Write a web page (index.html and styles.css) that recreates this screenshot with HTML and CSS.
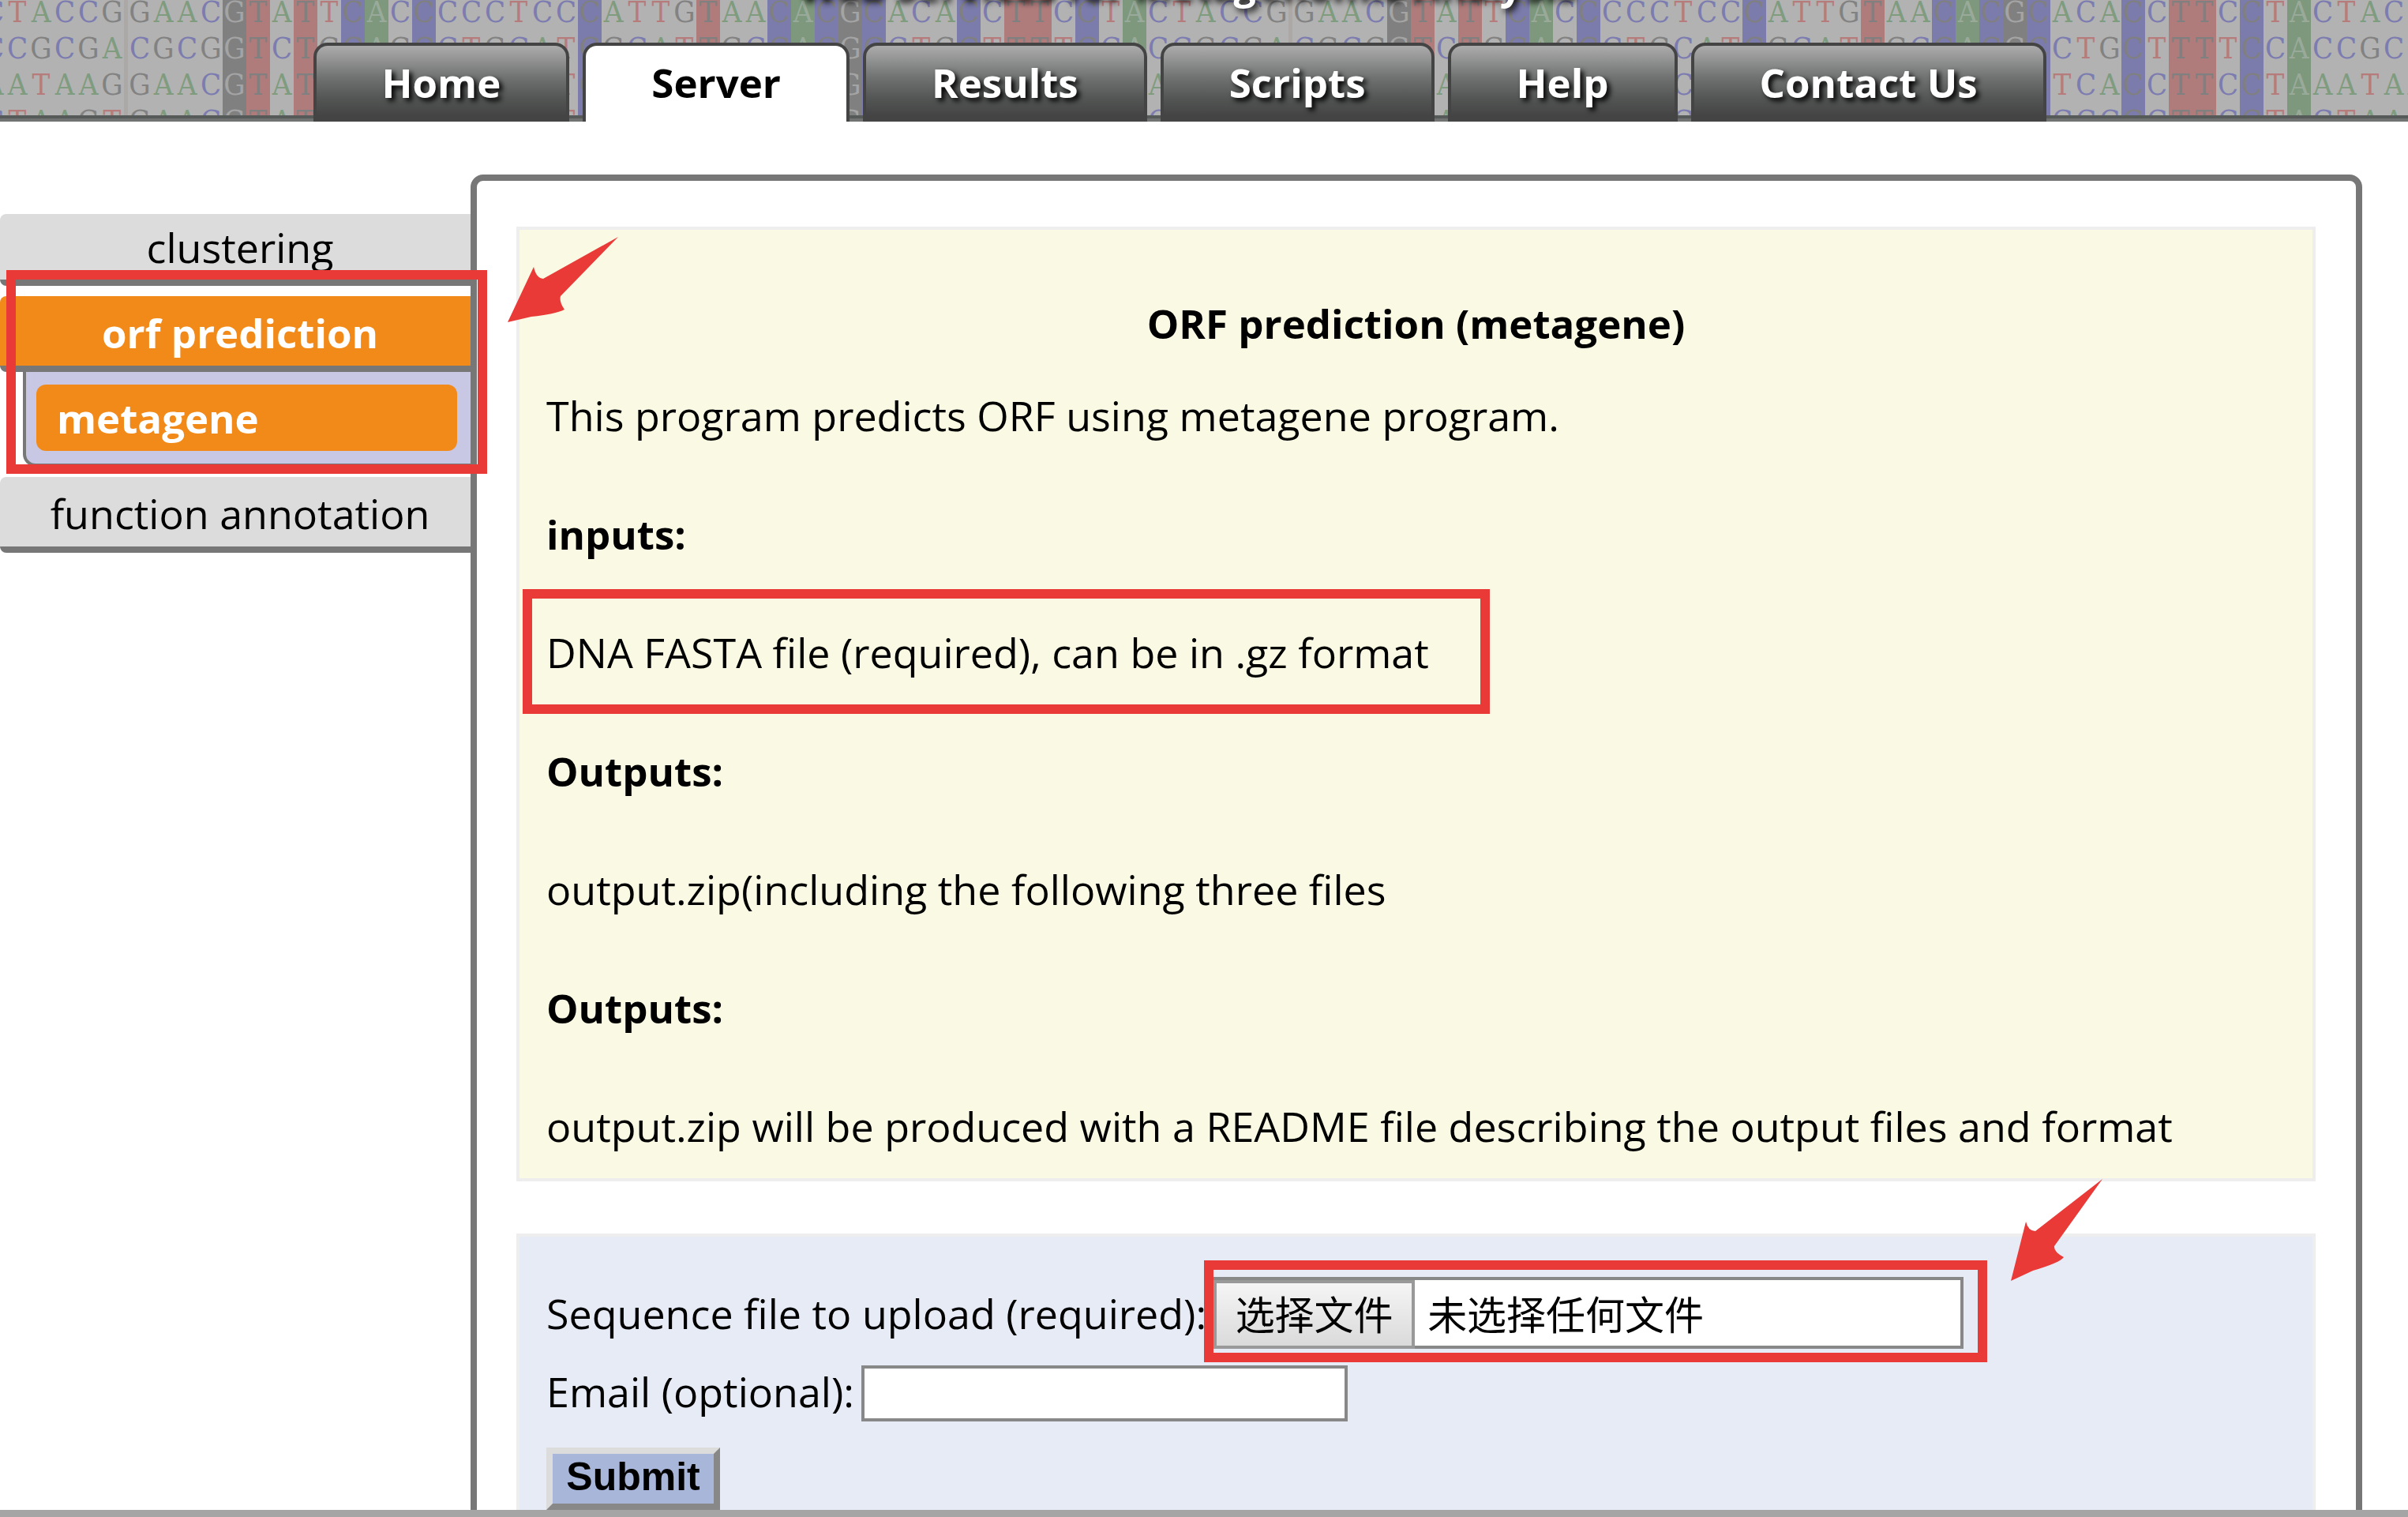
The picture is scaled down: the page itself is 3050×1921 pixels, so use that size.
FILE: index.html
```html
<!DOCTYPE html>
<html lang="en">
<head>
<meta charset="utf-8">
<meta name="viewport" content="width=device-width, initial-scale=1">
<title>ORF prediction (metagene)</title>
<link rel="stylesheet" href="styles.css">
</head>
<body>
<header class="banner">
  <div class="dna" id="dna" aria-hidden="true"></div>
  <h1 class="banner-title">Web Services for Metagenomic Analysis</h1>
  <nav class="tabs" aria-label="Main">
    <a class="tab" href="#home">Home</a>
    <a class="tab tab-active" href="#server" aria-current="page">Server</a>
    <a class="tab" href="#results">Results</a>
    <a class="tab" href="#scripts">Scripts</a>
    <a class="tab" href="#help">Help</a>
    <a class="tab" href="#contact">Contact Us</a>
  </nav>
</header>

<div class="layout">
  <nav class="side" aria-label="Tools">
    <a class="side-item side-first" href="#clustering">clustering</a>
    <div class="side-group">
      <a class="side-item side-active" href="#orf">orf prediction</a>
      <div class="side-sub">
        <a class="side-pill" href="#metagene">metagene</a>
      </div>
      <span class="mark mark-side"></span>
      <svg class="arrow arrow-side" viewBox="0 0 140 108" aria-hidden="true"><path d="M0 108 L33 38 Q36 52 45 53 L140 0 L67 75 Q65 82 72 92 Q60 98 30 101 Z"/></svg>
    </div>
    <a class="side-item" href="#annotation">function annotation</a>
  </nav>

  <main class="content">
    <section class="info">
      <h2 class="info-title">ORF prediction (metagene)</h2>
      <p>This program predicts ORF using metagene program.</p>
      <h3>inputs:</h3>
      <p class="marked">DNA FASTA file (required), can be in .gz format<span class="mark mark-input"></span></p>
      <h3>Outputs:</h3>
      <p>output.zip(including the following three files</p>
      <h3>Outputs:</h3>
      <p>output.zip will be produced with a README file describing the output files and format</p>
    </section>

    <form class="upload">
      <div class="row">
        <label for="sequence">Sequence file to upload (required):</label>
        <div class="file">
          <span class="file-button">选择文件</span>
          <span class="file-name">未选择任何文件</span>
          <input class="file-input" type="file" id="sequence" required>
          <span class="mark mark-file"></span>
          <svg class="arrow arrow-file" viewBox="0 0 116 129" aria-hidden="true"><path d="M0 129 L19 54 Q22 66 31 66 L116 0 L55 85 Q54 92 67 99 Q62 106 28 116 Z"/></svg>
        </div>
      </div>
      <div class="row row-email">
        <label for="email">Email (optional):</label>
        <input class="email" type="email" id="email">
      </div>
      <button class="submit" type="submit">Submit</button>
    </form>
  </main>
</div>
<div class="bottom-bar"></div>
<script src="script.js"></script>
</body>
</html>
```
FILE: styles.css
```css
* {
  box-sizing: border-box;
}

body {
  display: flex;
  flex-direction: column;
  height: 100vh;
  margin: 0;
  overflow: hidden;
  background: #fff;
  color: #000;
  font: 52px/76px "Open Sans", "Noto Sans", "Noto Sans CJK SC", sans-serif;
}

a {
  color: inherit;
  text-decoration: none;
}

/* Banner */
.banner {
  position: relative;
  display: flex;
  flex-direction: column;
  flex: none;
  overflow: hidden;
}

.dna {
  position: absolute;
  inset: 0;
  display: flex;
  overflow: hidden;
  background: #b2b2b2;
  border-bottom: 4px solid #707372;
  font: 38px/46px "DejaVu Serif Condensed", "DejaVu Serif", serif;
  text-align: center;
}

.dna::after {
  content: "";
  position: absolute;
  inset: auto 0 0;
  height: 4px;
  background: #565a58;
}

.base-col {
  flex: none;
  width: 30px;
  margin-top: -8px;
}

.base-col:first-child {
  margin-left: -23px;
}

.base {
  display: block;
  height: 46px;
}

.block-gap {
  flex: none;
  width: 5px;
  background: #aca8a5;
}

.base-A { color: #7f9c7f; }
.base-C { color: #7c7cb0; }
.base-G { color: #828282; }
.base-T { color: #b67c7c; }

.col-A { background: #7d987d; }
.col-C { background: #7b7bac; }
.col-G { background: #808080; }
.col-T { background: #b07b7b; }

.col-C .base, .col-T .base { color: #808080; }
.col-A .base { color: #9aaa9a; }
.col-G .base { color: #a4a4a4; }

.banner-title {
  position: relative;
  margin: -58px 0 36px;
  padding-right: 48px;
  color: #fff;
  font-size: 50px;
  line-height: 76px;
  text-align: center;
  text-shadow: 4px 4px 8px #000;
}

.tabs {
  position: relative;
  display: flex;
  gap: 17px;
  padding-left: 13%;
}

.tab {
  height: 100px;
  padding: 8px 83px 0;
  border: 4px solid #444;
  border-bottom: 0;
  border-radius: 18px 18px 0 0;
  background: linear-gradient(#acacac, #707271 42%, #545755 68%, #444 92%);
  color: #fff;
  font-size: 51px;
  font-weight: 700;
  text-shadow: 4px 4px 6px #000;
  white-space: nowrap;
}

.tab-active {
  background: #fff;
  color: #000;
  text-shadow: none;
}

/* Page body */
.layout {
  display: flex;
  flex: 1;
  min-height: 0;
  overflow: hidden;
}

.side {
  display: flex;
  flex-direction: column;
  flex: none;
  gap: 13px;
  width: 596px;
  padding-top: 117px;
}

.side-item {
  display: block;
  padding: 8px 0 4px 12px;
  border-bottom: 8px solid #777;
  border-radius: 8px 0 0 8px;
  background: #dcdcdc;
  text-align: center;
}

.side-first {
  padding: 4px 0 3px 12px;
}

.side-active {
  background: #f28a1a;
  color: #fff;
  font-size: 51px;
  font-weight: 700;
}

.side-group {
  position: relative;
  z-index: 1;
}

.side-sub {
  margin-left: 29px;
  padding: 16px 17px 16px 13px;
  border: solid #777;
  border-width: 0 0 4px 4px;
  border-radius: 0 0 0 16px;
  background: #c8c7e4;
}

.side-pill {
  display: block;
  padding: 4px 26px;
  border-radius: 12px;
  background: #f28a1a;
  color: #fff;
  font-size: 51px;
  font-weight: 700;
}

.content {
  flex: 1;
  align-self: flex-start;
  margin: 67px 58px 0 0;
  padding: 58px 51px 50px 50px;
  border: 8px solid #777;
  border-radius: 16px;
}

.info {
  margin-bottom: 66px;
  padding: 80px 34px 28px;
  border: 4px solid #eee;
  background: #faf9e3;
}

.info p,
.info h3 {
  margin: 0 0 74px;
}

.info h3 {
  font-size: 51px;
}

.info p:last-child {
  margin-bottom: 0;
}

.info-title {
  margin: 0 0 41px;
  font-size: 51px;
  text-align: center;
}

.marked {
  position: relative;
}

/* Upload form */
.upload {
  padding: 51px 34px 100px;
  border: 4px solid #eee;
  background: #e7ebf6;
}

.row {
  display: flex;
  align-items: center;
  gap: 9px;
}

.row-email {
  align-items: flex-end;
  margin: 16px 0 33px;
}

.file {
  position: relative;
  display: flex;
  width: 950px;
  height: 91px;
  border: 4px solid #888;
  background: #fff;
  font: 50px/75px "Noto Sans CJK SC", sans-serif;
}

.file-button {
  width: 255px;
  margin: 0 0 -4px -4px;
  padding: 0;
  border: 4px solid #999;
  background: linear-gradient(#f5f5f5, #dadada);
  text-align: center;
}

.file-name {
  padding: 4px 16px;
}

.file-input {
  position: absolute;
  inset: 0;
  width: 100%;
  opacity: 0;
}

.email {
  width: 616px;
  height: 71px;
  padding: 0 8px;
  border: 4px solid #888;
  background: #fff;
  font: inherit;
}

.submit {
  display: block;
  width: 220px;
  height: 79px;
  padding: 0 0 6px;
  border: 8px solid;
  border-color: #dcdcdc #888 #888 #dcdcdc;
  background: #a8b6d9;
  color: #000;
  font: 700 50px/56px "Liberation Sans", Arial, sans-serif;
}

/* Red call-outs drawn over the page */
.mark {
  position: absolute;
  border: 12px solid #e93a38;
  pointer-events: none;
}

.mark-side {
  inset: -33px -21px -9px 8px;
}

.mark-input {
  top: -42px;
  left: -30px;
  width: 1225px;
  height: 158px;
}

.mark-file {
  inset: -25px -34px -21px -16px;
}

.arrow {
  position: absolute;
  fill: #e93a38;
}

.arrow-side {
  top: -75px;
  left: 643px;
  width: 140px;
}

.arrow-file {
  top: -128px;
  left: 1006px;
  width: 116px;
}

.bottom-bar {
  flex: none;
  height: 9px;
  background: #a5a5a5;
}
```
FILE: script.js
```js
// Fills the banner with a repeating sequence alignment, column by column.
const rows = [
  'TACCGGAACGTATTCACCCCCTCCCATTGTAACACGCACACCTTCCTAC',
  'CGCGACGCGGTCTGCAGCCTGCATCGCATTGCCACGCCTGCTTTTCCAC',
  'ATAAGGAACGTATGCACCTGCCATCAATCTGACACGCTCACCTTCCTAA',
  'TAAGTGAACGTATGCACCTGCCATCAATCTGACACGCCCCCCTTCCTAC'
];
const conserved = [9, 10, 12, 14, 15, 17, 24, 29, 32, 33, 34, 35, 36, 40, 42, 43, 45, 47];
const length = rows[0].length;
const dna = document.getElementById('dna');
const columns = Math.ceil(window.innerWidth / 30) + 1;

for (let i = length - 1; i < length - 1 + columns; i++) {
  const c = i % length;
  const col = document.createElement('div');
  col.className = 'base-col' + (conserved.includes(c) ? ' col-' + rows[0][c] : '');
  for (const row of rows) {
    const base = document.createElement('span');
    base.className = 'base base-' + row[c];
    base.textContent = row[c];
    col.append(base);
  }
  dna.append(col);
  if (c === 4) {
    const gap = document.createElement('div');
    gap.className = 'block-gap';
    dna.append(gap);
  }
}
```
